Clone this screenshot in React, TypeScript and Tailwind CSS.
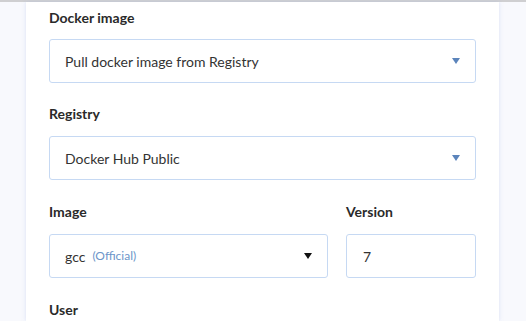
import React from "react";

function Caret({ color }: { color: string }) {
  return (
    <svg width="8" height="6" viewBox="0 0 8 6" className="shrink-0">
      <path d="M0 0 H8 L4 6 Z" fill={color} />
    </svg>
  );
}

function Select({ children, caret }: { children: React.ReactNode; caret: string }) {
  return (
    <div className="flex h-[44px] items-center justify-between rounded-[3px] border border-[#c6d9f3] bg-white pl-[15px] pr-[15px] text-[14px] text-[#333]">
      <div className="flex items-center">{children}</div>
      <Caret color={caret} />
    </div>
  );
}

export default function App() {
  return (
    <div
      className="flex h-[321px] w-[526px] bg-[#f8f9fd] border-t-2 border-[#cfcfd1]"
      style={{ fontFamily: "Lato, 'Noto Sans', sans-serif" }}
    >
      <div className="ml-[26px] w-[473px] bg-white shadow-[0_0_4px_rgba(160,180,230,0.35)] px-[23px] pt-[6px] flex flex-col overflow-hidden">
        <div className="text-[14px] font-bold text-[#2a2a2a] leading-[20px]">Docker image</div>
        <div className="mt-[11px] w-[427px]">
          <Select caret="#5b84bb">Pull docker image from Registry</Select>
        </div>
        <div className="mt-[21px] text-[14px] font-bold text-[#2a2a2a] leading-[20px]">Registry</div>
        <div className="mt-[12px] w-[427px]">
          <Select caret="#5b84bb">Docker Hub Public</Select>
        </div>
        <div className="mt-[22px] flex w-[427px] gap-[18px]">
          <div className="flex w-[279px] flex-col">
            <div className="text-[14px] font-bold text-[#2a2a2a] leading-[20px]">Image</div>
            <div className="mt-[12px]">
              <Select caret="#111">
                <span className="text-[#333]">gcc</span>
                <span className="ml-[7px] text-[12px] text-[#6c95c9]">(Official)</span>
              </Select>
            </div>
          </div>
          <div className="flex flex-1 flex-col">
            <div className="text-[14px] font-bold text-[#2a2a2a] leading-[20px]">Version</div>
            <div className="mt-[12px] flex h-[44px] items-center rounded-[3px] border border-[#c6d9f3] pl-[16px] text-[14px] text-[#333]">
              7
            </div>
          </div>
        </div>
        <div className="mt-[22px] text-[14px] font-bold text-[#2a2a2a] leading-[20px]">User</div>
      </div>
    </div>
  );
}
